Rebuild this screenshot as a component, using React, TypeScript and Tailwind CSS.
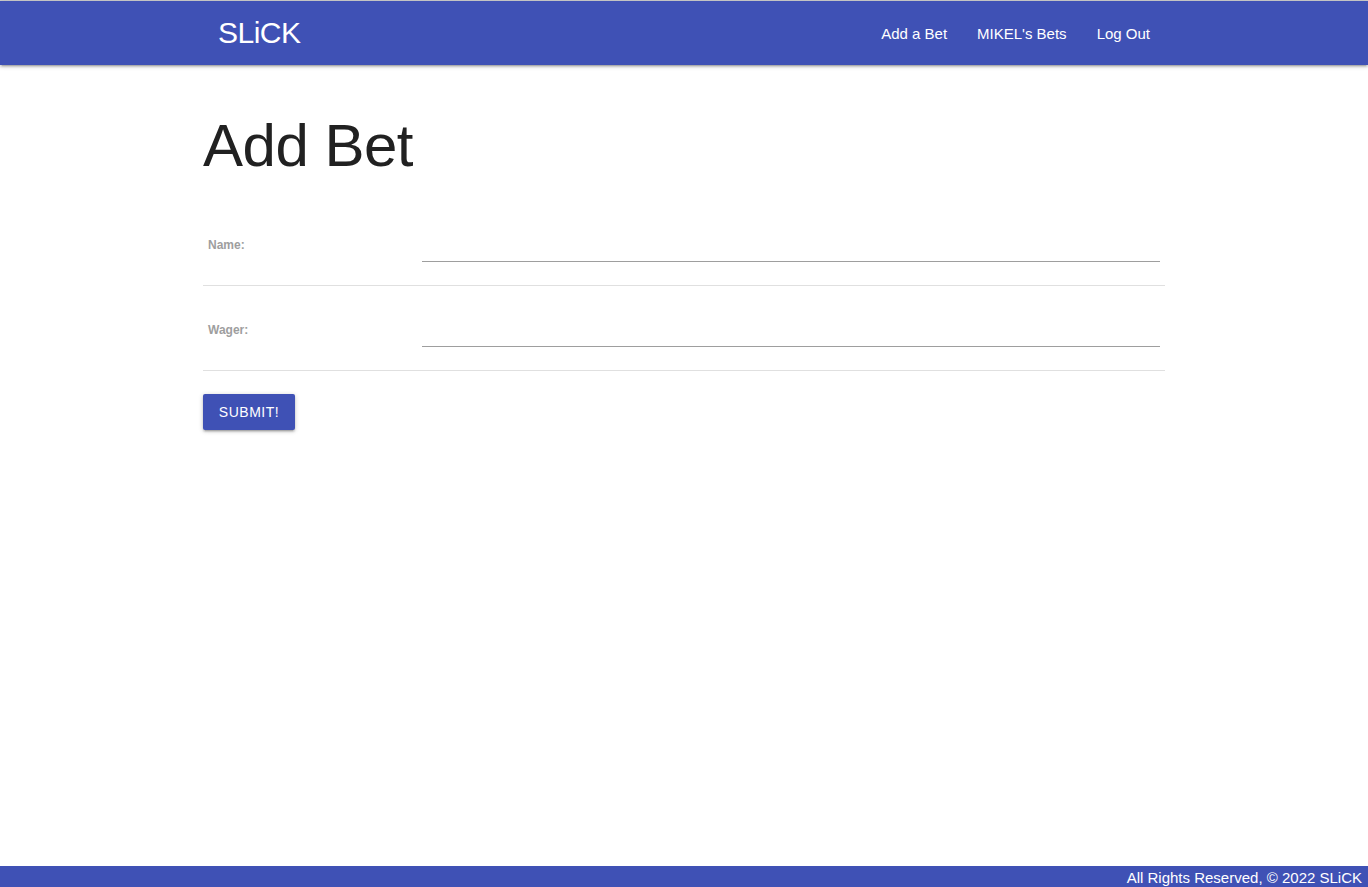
import React from "react";

export default function App() {
  const font = { fontFamily: '"Liberation Sans", Arial, sans-serif' };
  return (
    <div className="min-h-screen flex flex-col bg-white" style={font}>
      <div className="h-px bg-[#cfcfcf]" />
      <nav className="h-[64px] bg-[#3f51b5] shadow-[0_2px_2px_0_rgba(0,0,0,0.14),0_3px_1px_-2px_rgba(0,0,0,0.12),0_1px_5px_0_rgba(0,0,0,0.2)] relative z-10">
        <div className="w-[962px] mx-auto h-full flex items-center justify-between">
          <a className="pl-[15px] text-white text-[30px] tracking-[-0.5px] leading-none">SLiCK</a>
          <ul className="flex items-center text-white text-[15px] pt-[2px]">
            <li className="px-[15px]">Add a Bet</li>
            <li className="px-[15px]">MIKEL's Bets</li>
            <li className="px-[15px]">Log Out</li>
          </ul>
        </div>
      </nav>
      <main className="flex-1">
        <div className="w-[962px] mx-auto">
          <h1 className="mt-[43px] text-[60px] leading-[76px] text-[#212121] tracking-[-0.5px]">Add Bet</h1>
          <div className="mt-[17px]">
            {["Name:", "Wager:"].map((l) => (
              <div key={l} className="flex h-[85px] border-b border-[#e0e0e0]">
                <div className="w-[219px] pl-[5px] pt-[3px] flex items-center text-[12px] font-bold text-[#9e9e9e]">
                  {l}
                </div>
                <div className="flex-1 pr-[5px] pt-[13px]">
                  <div className="h-[48px] border-b border-[#9e9e9e]" />
                </div>
              </div>
            ))}
          </div>
          <button className="mt-[23px] h-[36px] w-[92px] rounded-[2px] bg-[#3f51b5] text-white text-[14px] tracking-[0.5px] uppercase shadow-[0_2px_2px_0_rgba(0,0,0,0.14),0_3px_1px_-2px_rgba(0,0,0,0.12),0_1px_5px_0_rgba(0,0,0,0.2)]">
            SUBMIT!
          </button>
        </div>
      </main>
      <footer className="h-[21px] bg-[#3f51b5] flex items-center justify-end pr-[6px] pt-[3px] text-white text-[15px]">
        All Rights Reserved, © 2022 SLiCK
      </footer>
    </div>
  );
}
